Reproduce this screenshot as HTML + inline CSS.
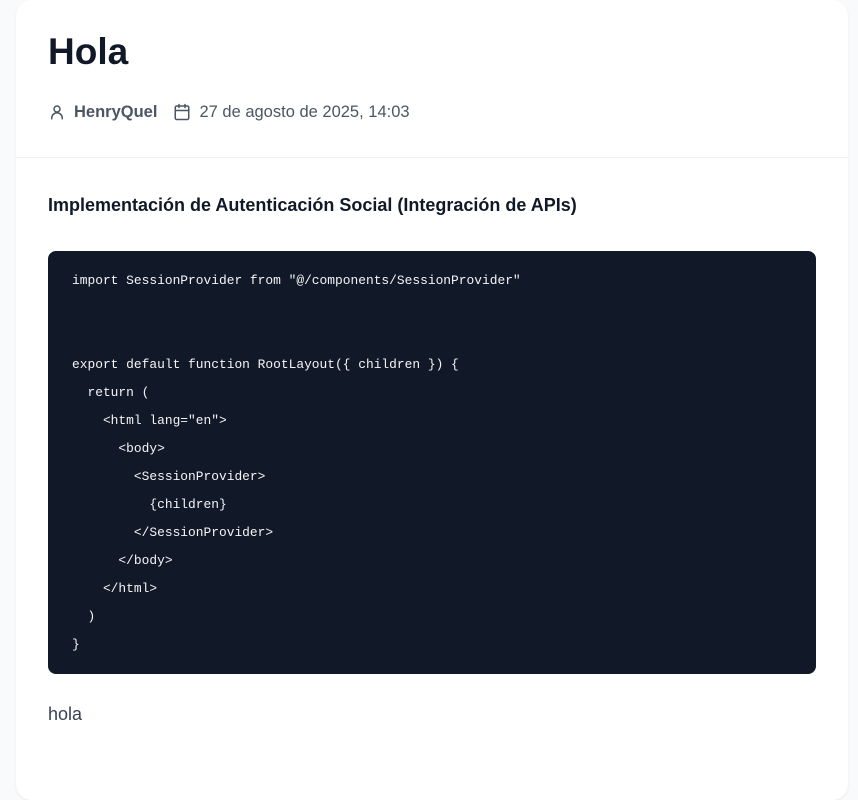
<!DOCTYPE html>
<html><head><meta charset="utf-8"><style>
body{margin:0;background:#f8fafc;font-family:"Liberation Sans",sans-serif;width:858px;height:776px;overflow:hidden}
.card{position:absolute;left:16px;top:0;width:832px;height:800px;background:#fff;border-radius:16px;box-shadow:0 1px 3px rgba(0,0,0,.06)}
h1{position:absolute;left:32px;top:30px;margin:0;font-size:37px;line-height:44px;font-weight:700;color:#111827}
.meta{position:absolute;left:32px;top:101px;height:22px;display:flex;align-items:center;font-size:16.5px;color:#4b5563}
.meta svg{margin-right:8px}
.div{position:absolute;left:0;right:0;top:157px;border-top:1px solid #f0f1f3}
h2{position:absolute;left:32px;top:193px;margin:0;font-size:18px;line-height:24px;font-weight:700;color:#111827}
pre{position:absolute;left:32px;top:251px;width:720px;margin:0;padding:16px 24px;background:#111827;border-radius:8px;color:#f3f4f6;font-family:"Liberation Mono",monospace;font-size:12.9px;line-height:28px;height:391px}
.p{position:absolute;left:32px;top:702px;font-size:18px;color:#374151;line-height:24px}
</style></head><body>
<div class="card">
<h1>Hola</h1>
<div class="meta">
<svg width="18" height="18" viewBox="0 0 24 24" fill="none" stroke="#4b5563" stroke-width="2" stroke-linecap="round"><circle cx="12" cy="8" r="4"/><path d="M5 21v-1a6 6 0 0 1 14 0v1"/></svg>
<span style="font-weight:700;margin-right:16px">HenryQuel</span>
<svg width="18" height="18" viewBox="0 0 24 24" fill="none" stroke="#4b5563" stroke-width="2" stroke-linecap="round"><rect x="3" y="4" width="18" height="18" rx="2"/><path d="M16 2v4M8 2v4M3 10h18"/></svg>
<span>27 de agosto de 2025, 14:03</span>
</div>
<div class="div"></div>
<h2>Implementación de Autenticación Social (Integración de APIs)</h2>
<pre>import SessionProvider from "@/components/SessionProvider"


export default function RootLayout({ children }) {
  return (
    &lt;html lang="en"&gt;
      &lt;body&gt;
        &lt;SessionProvider&gt;
          {children}
        &lt;/SessionProvider&gt;
      &lt;/body&gt;
    &lt;/html&gt;
  )
}</pre>
<div class="p">hola</div>
</div>
</body></html>
